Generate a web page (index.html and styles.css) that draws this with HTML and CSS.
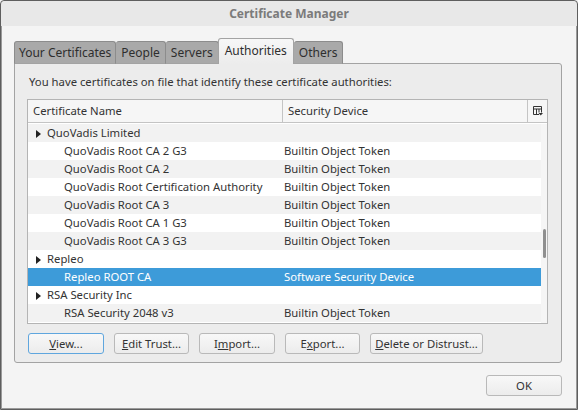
FILE: index.html
```html
<!DOCTYPE html>
<html lang="en">
<head>
    <meta charset="UTF-8">
    <title>Certificate Manager</title>
    <link rel="stylesheet" href="styles.css">
</head>
<body>
    <div class="window">
        <div class="titlebar">Certificate Manager</div>
        <div class="dialog">
            <ul class="tabs">
                <li>Your Certificates</li>
                <li>People</li>
                <li>Servers</li>
                <li class="active">Authorities</li>
                <li>Others</li>
            </ul>
            <div class="panel">
                <p class="intro">You have certificates on file that identify these certificate authorities:</p>
                <div class="tree">
                    <div class="tree-head">
                        <span class="col-name">Certificate Name</span>
                        <span class="col-device">Security Device</span>
                        <span class="col-pick">
                            <svg width="10" height="10" viewBox="0 0 10 10">
                                <path d="M0.5 0.5h8v6M0.5 0.5v8h5.5M0.5 3h8M3.5 3v5.5M6 3v3.5" fill="none" stroke="#333" stroke-width="1"/>
                                <path d="M5.5 7h4.5l-2.25 2.5z" fill="#333"/>
                            </svg>
                        </span>
                    </div>
                    <div class="tree-body">
                        <ul class="rows">
                            <li class="group"><span><i class="arrow"></i>QuoVadis Limited</span><span></span></li>
                            <li><span>QuoVadis Root CA 2 G3</span><span>Builtin Object Token</span></li>
                            <li><span>QuoVadis Root CA 2</span><span>Builtin Object Token</span></li>
                            <li><span>QuoVadis Root Certification Authority</span><span>Builtin Object Token</span></li>
                            <li><span>QuoVadis Root CA 3</span><span>Builtin Object Token</span></li>
                            <li><span>QuoVadis Root CA 1 G3</span><span>Builtin Object Token</span></li>
                            <li><span>QuoVadis Root CA 3 G3</span><span>Builtin Object Token</span></li>
                            <li class="group"><span><i class="arrow"></i>Repleo</span><span></span></li>
                            <li class="selected"><span>Repleo ROOT CA</span><span>Software Security Device</span></li>
                            <li class="group"><span><i class="arrow"></i>RSA Security Inc</span><span></span></li>
                            <li><span>RSA Security 2048 v3</span><span>Builtin Object Token</span></li>
                        </ul>
                        <div class="scrollbar"><div class="thumb"></div></div>
                    </div>
                </div>
                <div class="actions">
                    <button class="focus"><u>V</u>iew...</button>
                    <button class="w74"><u>E</u>dit Trust...</button>
                    <button>I<u>m</u>port...</button>
                    <button class="w74">E<u>x</u>port...</button>
                    <button class="wide"><u>D</u>elete or Distrust...</button>
                </div>
            </div>
            <div class="footer">
                <button>OK</button>
            </div>
        </div>
    </div>
</body>
</html>
```

FILE: styles.css
```css
*{
    margin: 0;
    padding: 0;
    box-sizing: border-box;
}
body{
    width: 578px;
    height: 410px;
    font-family: "Noto Sans", "Open Sans", sans-serif;
    font-size: 11.3px;
    color: #333;
    background: #f4f4f4;
}
.window{
    width: 578px;
    height: 410px;
    border: 1px solid #5e5e5e;
    border-radius: 4px 4px 0 0;
    background: #f4f4f4;
    box-shadow: inset 1px 0 0 #9a9a9a, inset -1px 0 0 #9a9a9a, inset 0 -1px 0 #9a9a9a;
}
.titlebar{
    height: 25px;
    line-height: 26px;
    text-align: center;
    font-weight: bold;
    font-size: 12px;
    color: #7b7b7b;
    background: #e8e8e8;
    border-radius: 4px 4px 0 0;
}
.dialog{
    padding: 13px 15px 0 13px;
}
.tabs{
    display: flex;
    align-items: flex-end;
    list-style: none;
    height: 25px;
    position: relative;
    z-index: 1;
    margin-bottom: -1px;
    font-size: 12px;
}
.tabs li{
    height: 23px;
    line-height: 21px;
    padding: 0 5px;
    background: #a9a9a9;
    border: 1px solid #8c8c8c;
    border-left: none;
    border-bottom-color: #a3a3a3;
    border-radius: 3px 3px 0 0;
    color: #2e2e2e;
}
.tabs li:first-child{
    border-left: 1px solid #8c8c8c;
    padding: 0 4px;
}
.tabs li.active{
    height: 26px;
    line-height: 23px;
    padding: 0 6px;
    background: linear-gradient(#f7f7f7, #ececec);
    border-color: #a3a3a3;
    border-bottom: none;
    border-left: 1px solid #a3a3a3;
    margin-left: -1px;
}
.panel{
    height: 300px;
    background: #ececec;
    border: 1px solid #a3a3a3;
    border-radius: 0 3px 3px 3px;
    padding: 10px 13px 0 12px;
}
.intro{
    height: 25px;
    line-height: 16px;
    padding-left: 2px;
}
.tree{
    height: 225px;
    background: #fff;
    border: 1px solid #b4b4b4;
    display: flex;
    flex-direction: column;
}
.tree-head{
    display: flex;
    height: 23px;
    line-height: 22px;
    background: #f6f6f6;
    border-bottom: 1px solid #c4c4c4;
}
.tree-head span{
    padding-left: 5px;
    border-right: 1px solid #c4c4c4;
}
.col-name{
    width: 255px;
}
.col-device{
    width: 245px;
}
.tree-head .col-pick{
    flex: 1;
    border-right: none;
    display: flex;
    align-items: center;
    padding-left: 5px;
}
.tree-body{
    flex: 1;
    display: flex;
    overflow: hidden;
    padding-top: 1px;
}
.rows{
    flex: 1;
    list-style: none;
}
.rows li{
    display: grid;
    grid-template-columns: 256px 1fr;
    height: 18px;
    line-height: 18px;
    background: #fff;
}
.rows li:nth-child(odd){
    background: #f2f2f2;
}
.rows li span:first-child{
    padding-left: 36px;
}
.rows li.group{
    background: #fff;
}
.rows li:first-child.group{
    background: #f2f2f2;
}
.rows li.group span:first-child{
    padding-left: 8px;
}
.rows li.selected{
    background: #3d9bd9;
    color: #fff;
}
.arrow{
    display: inline-block;
    width: 0;
    height: 0;
    border-top: 4px solid transparent;
    border-bottom: 4px solid transparent;
    border-left: 5px solid #222;
    margin-right: 6px;
    vertical-align: -1px;
}
.scrollbar{
    width: 6px;
    background: #f5f5f5;
    position: relative;
}
.thumb{
    position: absolute;
    left: 2px;
    top: 105px;
    width: 3px;
    height: 29px;
    border-radius: 2px;
    background: #8f8f8f;
}
.actions{
    display: flex;
    gap: 10px;
    margin-top: 9px;
    padding-left: 1px;
}
button{
    font-family: inherit;
    font-size: 11.3px;
    color: #333;
    width: 76px;
    height: 21px;
    background: linear-gradient(#f8f8f8, #ececec);
    border: 1px solid #b9b9b9;
    border-radius: 3px;
}
button.w74{
    width: 75px;
}
button.wide{
    width: 113px;
}
button.focus{
    border-color: #5fa6de;
}
.footer{
    display: flex;
    justify-content: flex-end;
    padding-top: 12px;
}
```
